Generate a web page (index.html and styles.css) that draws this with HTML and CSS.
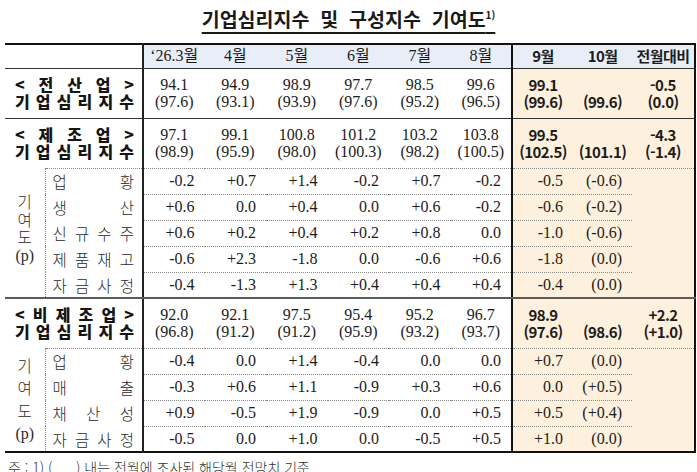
FILE: index.html
```html
<!DOCTYPE html>
<html lang="ko">
<head>
<meta charset="utf-8">
<link rel="stylesheet" href="styles.css">
</head>
<body>
<div class="page">
  <h1 class="title"><span class="title-text">기업심리지수&nbsp; 및&nbsp; 구성지수&nbsp; 기여도<sup>1)</sup></span></h1>
  <table class="bsi">
    <colgroup>
      <col class="w-gi"><col class="w-lab">
      <col class="w-d"><col class="w-d"><col class="w-d"><col class="w-d"><col class="w-d"><col class="w-d">
      <col class="w-m9"><col class="w-m10"><col class="w-diff">
    </colgroup>
    <thead>
      <tr class="head">
        <th colspan="2" class="corner lab"></th>
        <th>‘26.3월</th><th>4월</th><th>5월</th><th>6월</th><th>7월</th><th>8월</th>
        <th class="hl-l bold">9월</th><th class="bold">10월</th><th class="hl-r bold">전월대비</th>
      </tr>
    </thead>
    <tbody>
      <tr class="main r1">
        <th colspan="2" class="grp lab"><span class="jl">&lt; 전 산 업 &gt;</span><span class="jl">기 업 심 리 지 수</span></th>
        <td>94.1<br>(97.6)</td><td>94.9<br>(93.1)</td><td>98.9<br>(93.9)</td><td>97.7<br>(97.6)</td><td>98.5<br>(95.2)</td><td>99.6<br>(96.5)</td>
        <td class="hl hl-l bold">99.1<br>(99.6)</td><td class="hl bold">&nbsp;<br>(99.6)</td><td class="hl hl-r bold">-0.5<br>(0.0)</td>
      </tr>
      <tr class="main r2">
        <th colspan="2" class="grp lab"><span class="jl">&lt; 제 조 업 &gt;</span><span class="jl">기 업 심 리 지 수</span></th>
        <td>97.1<br>(98.9)</td><td>99.1<br>(95.9)</td><td>100.8<br>(98.0)</td><td>101.2<br>(100.3)</td><td>103.2<br>(98.2)</td><td>103.8<br>(100.5)</td>
        <td class="hl hl-l bold">99.5<br>(102.5)</td><td class="hl bold">&nbsp;<br>(101.1)</td><td class="hl hl-r bold">-4.3<br>(-1.4)</td>
      </tr>
      <tr class="sub first">
        <th rowspan="5" class="gi gi-a">기<br>여<br>도<br><span class="p">(p)</span></th>
        <th class="sl lab"><span class="jl">업 황</span></th>
        <td>-0.2</td><td>+0.7</td><td>+1.4</td><td>-0.2</td><td>+0.7</td><td>-0.2</td>
        <td class="hl hl-l">-0.5</td><td class="hl">(-0.6)</td>
        <td rowspan="5" class="hl hl-r blank end"></td>
      </tr>
      <tr class="sub">
        <th class="sl lab"><span class="jl">생 산</span></th>
        <td>+0.6</td><td>0.0</td><td>+0.4</td><td>0.0</td><td>+0.6</td><td>-0.2</td>
        <td class="hl hl-l">-0.6</td><td class="hl">(-0.2)</td>
      </tr>
      <tr class="sub">
        <th class="sl lab"><span class="jl">신 규 수 주</span></th>
        <td>+0.6</td><td>+0.2</td><td>+0.4</td><td>+0.2</td><td>+0.8</td><td>0.0</td>
        <td class="hl hl-l">-1.0</td><td class="hl">(-0.6)</td>
      </tr>
      <tr class="sub">
        <th class="sl lab"><span class="jl">제 품 재 고</span></th>
        <td>-0.6</td><td>+2.3</td><td>-1.8</td><td>0.0</td><td>-0.6</td><td>+0.6</td>
        <td class="hl hl-l">-1.8</td><td class="hl">(0.0)</td>
      </tr>
      <tr class="sub last">
        <th class="sl lab"><span class="jl">자 금 사 정</span></th>
        <td>-0.4</td><td>-1.3</td><td>+1.3</td><td>+0.4</td><td>+0.4</td><td>+0.4</td>
        <td class="hl hl-l">-0.4</td><td class="hl">(0.0)</td>
      </tr>
      <tr class="main r3">
        <th colspan="2" class="grp lab"><span class="jl">&lt; 비 제 조 업 &gt;</span><span class="jl">기 업 심 리 지 수</span></th>
        <td>92.0<br>(96.8)</td><td>92.1<br>(91.2)</td><td>97.5<br>(91.2)</td><td>95.4<br>(95.9)</td><td>95.2<br>(93.2)</td><td>96.7<br>(93.7)</td>
        <td class="hl hl-l bold">98.9<br>(97.6)</td><td class="hl bold">&nbsp;<br>(98.6)</td><td class="hl hl-r bold">+2.2<br>(+1.0)</td>
      </tr>
      <tr class="sub first">
        <th rowspan="4" class="gi gi-b">기<br>여<br>도<br><span class="p">(p)</span></th>
        <th class="sl lab"><span class="jl">업 황</span></th>
        <td>-0.4</td><td>0.0</td><td>+1.4</td><td>-0.4</td><td>0.0</td><td>0.0</td>
        <td class="hl hl-l">+0.7</td><td class="hl">(0.0)</td>
        <td rowspan="4" class="hl hl-r blank"></td>
      </tr>
      <tr class="sub">
        <th class="sl lab"><span class="jl">매 출</span></th>
        <td>-0.3</td><td>+0.6</td><td>+1.1</td><td>-0.9</td><td>+0.3</td><td>+0.6</td>
        <td class="hl hl-l">0.0</td><td class="hl">(+0.5)</td>
      </tr>
      <tr class="sub">
        <th class="sl lab"><span class="jl">채 산 성</span></th>
        <td>+0.9</td><td>-0.5</td><td>+1.9</td><td>-0.9</td><td>0.0</td><td>+0.5</td>
        <td class="hl hl-l">+0.5</td><td class="hl">(+0.4)</td>
      </tr>
      <tr class="sub">
        <th class="sl lab"><span class="jl">자 금 사 정</span></th>
        <td>-0.5</td><td>0.0</td><td>+1.0</td><td>0.0</td><td>-0.5</td><td>+0.5</td>
        <td class="hl hl-l">+1.0</td><td class="hl">(0.0)</td>
      </tr>
    </tbody>
  </table>
  <p class="note">주 : 1) (&nbsp;&nbsp;&nbsp;&nbsp;&nbsp; ) 내는 전월에 조사된 해당월 전망치 기준</p>
</div>
</body>
</html>
```
FILE: styles.css
```css
body {
  margin: 0;
  background: #ffffff;
  color: #1c1c1c;
  font-family: "Liberation Serif", "Noto Sans CJK KR", serif;
}

.page {
  width: 697px;
  height: 472px;
  overflow: hidden;
}

.title {
  margin: 0;
  height: 43px;
  box-sizing: border-box;
  padding-top: 8px;
  text-align: center;
  font: 700 19.5px/22px "Noto Sans CJK KR", sans-serif;
  color: #1a1a1a;
}

.title-text {
  text-decoration: underline;
  text-underline-offset: 5px;
  text-decoration-thickness: 1.5px;
}

.title sup {
  font-size: 10px;
  line-height: 0;
  vertical-align: 8px;
}

.bsi {
  margin-left: 5px;
  width: 690px;
  table-layout: fixed;
  border-collapse: collapse;
  border-top: 2px solid #111;
  border-bottom: 2px solid #111;
  font-size: 16px;
}

.w-gi { width: 40px; }
.w-lab { width: 98px; }
.w-d { width: 61.5px; }
.w-m9 { width: 61px; }
.w-m10 { width: 59px; }
.w-diff { width: 63px; }

.bsi th,
.bsi td {
  padding: 0;
  font-weight: 400;
  vertical-align: middle;
}

/* header */
.head { height: 24px; }
.head th {
  background: #e8eef8;
  border-bottom: 1px solid #333;
  text-align: center;
  line-height: 18px;
}
.head th.corner { background: #ffffff; }

.bold {
  font-family: "Noto Sans CJK KR", sans-serif;
  font-weight: 700 !important;
  font-size: 15px;
  letter-spacing: -0.6px;
}
.head th.bold { font-size: 15px; }

/* vertical lines */
.lab { border-right: 2px solid #222; }
.hl-l { border-left: 2px solid #111; }
.hl-r { border-right: 2px solid #111; }

.hl { background: #fdf0dd; }

/* main rows */
.main { height: 50px; }
.main td {
  text-align: center;
  line-height: 17px;
}
.r1 > * { border-bottom: 1px solid #333; }
.r3 > * { border-top: 2px solid #5a5a5a; }

.grp {
  padding: 0 8px 0 10px !important;
  font-family: "Noto Sans CJK KR", sans-serif;
  font-weight: 900 !important;
  font-size: 16px;
  line-height: 17.5px;
  color: #151515;
}

.jl {
  display: block;
  text-align: justify;
  text-align-last: justify;
}

/* sub rows */
.sub { height: 26px; }
.sub td {
  text-align: right;
  padding-right: 10px;
  line-height: 18px;
  border-top: 1px dotted #8a8a8a;
}
.sub .sl {
  padding: 0 8px 0 7px;
  font-family: "Noto Sans CJK KR", sans-serif;
  font-size: 15.5px;
  line-height: 18px;
  color: #2a2a2a;
  font-weight: 300;
}
.sub.first .sl { border-top: 1px dotted #8a8a8a; }
.sub.last > * { border-bottom: 2px solid #5a5a5a; }
.blank.end { border-bottom: 2px solid #5a5a5a; }

.gi {
  border-right: 1px dotted #8a8a8a;
  text-align: center;
  font-family: "Noto Sans CJK KR", sans-serif;
  font-weight: 300 !important;
  font-size: 15.5px;
  color: #2a2a2a;
}
.gi-a { line-height: 17.5px; padding-bottom: 8px !important; border-bottom: 2px solid #5a5a5a; }
.gi-b { line-height: 22.5px; }
.gi .p { font-family: "Liberation Serif", serif; font-size: 16px; }

.note {
  margin: 5px 0 0 8px;
  font-family: "Noto Sans CJK KR", sans-serif;
  font-weight: 300;
  font-size: 14px;
  line-height: 18px;
  color: #333;
  white-space: nowrap;
}
```
